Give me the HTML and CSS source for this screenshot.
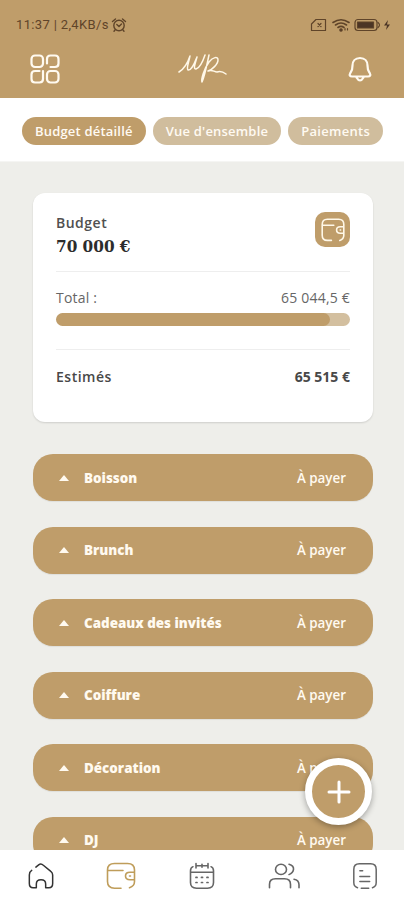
FILE: index.html
```
<!DOCTYPE html>
<html lang="fr">
<head>
<meta charset="utf-8">
<title>Budget</title>
<link rel="stylesheet" href="styles.css">
</head>
<body>
<div class="app">
  <header class="header">
    <div class="status">
      <span class="clock">11:37 | 2,4KB/s</span>
      <svg class="alarm" width="16" height="16" viewBox="0 0 16 16"><circle cx="8" cy="8.5" r="5.2"/><path d="M1.5 4.5 4.5 2M14.5 4.5 11.5 2M5.8 7.5 8 9.5l2.5-2.5M4 13l-1 1.2M12 13l1 1.2"/></svg>
      <svg class="signals" width="82" height="14" viewBox="0 0 82 14">
        <path d="M6 1.500h9.500v11h-14V6z"/><path d="m8 5.500 3 3m0-3-3 3"/>
        <path d="M23 4.500q8-5.500 16 0M25.500 7q5.500-4 11 0M28 9.500q3-2.200 6 0" stroke-width="1.600"/><circle class="solid" cx="31" cy="12" r="1.200"/><path d="M35 10.500v1.500m2.500-1.500v1.500"/>
        <rect x="45" y="1.500" width="22" height="11" rx="3"/><rect class="solid" x="47.500" y="4" width="16" height="6"/><path d="M68 4.500q3 2.500 0 5"/>
        <path class="solid" d="m78 2-4 5.500h3l-1 4.500 4-5.500h-3z" stroke="none"/>
      </svg>
    </div>
    <div class="topbar">
      <svg class="grid-icon" width="30" height="30" viewBox="0 0 30 30"><rect x="1.500" y="1.500" width="11.500" height="11.500" rx="3.500"/><path d="M17 9.500V5q0-3.500 3.500-3.500H25q3.500 0 3.500 3.500v4.500q0 3.500-3.500 3.500h-4.500M9.500 17H5q-3.500 0-3.500 3.500V25q0 3.500 3.500 3.500h4.500q3.500 0 3.500-3.500v-8"/><rect x="17" y="17" width="11.500" height="11.500" rx="3.500"/></svg>
      <svg class="logo" width="50" height="36" viewBox="0 0 50 36"><path d="M1 21C6 18 10 11 12 5c-1 6-4 12-2 14 4 1 7-8 9-13-2 7-4 12-1 12 4-1 7-8 9-14"/><path class="stem" d="M31 4c-2 9-4 20-7 27-1-3 2-13 7-20 4-5 9-6 9-2 0 4-6 10-10 11 4-2 6 1 9 1 3-1 5-1 9 2"/></svg>
      <svg class="bell" width="24" height="28" viewBox="0 0 24 28"><path d="M12 3c-5 0-7.500 3.300-7.500 7.500 0 5-1 5.500-2.300 7.700C1 20.500 2 21.500 4 21.500h16c2 0 3-1 1.800-3.300C20.500 16 19.500 15.500 19.500 10.500C19.500 6.300 17 3 12 3zM8.500 22.500q3.500 6 7 0"/></svg>
    </div>
  </header>
  <nav class="tabs">
    <a class="tab tab-detail active">Budget détaillé</a>
    <a class="tab tab-overview">Vue d'ensemble</a>
    <a class="tab tab-payments">Paiements</a>
  </nav>
  <main class="content">
    <section class="card">
      <div class="summary">
        <div>
          <div class="label">Budget</div>
          <div class="amount">70 000 €</div>
        </div>
        <div class="wallet-badge"><svg width="24" height="24" viewBox="0 0 30 30"><path d="M13 28H8q-6.500 0-6.500-6.500V8Q1.500 1.500 8 1.500h14q6.500 0 6.500 6.500v13.500q0 5-5 6.500M2 9h14M28.500 11H24q-4.500 0-4.500 4t4.500 4h4.500M24 15h.5"/></svg></div>
      </div>
      <div class="progress">
        <div class="line total"><span>Total :</span><span class="total-value">65 044,5 €</span></div>
        <div class="track"><div class="fill"></div></div>
      </div>
      <div class="line estimate"><span>Estimés</span><span class="estimate-value">65 515 €</span></div>
    </section>
    <div class="list">
      <div class="row"><i class="caret"></i><span class="name">Boisson</span><span class="pay">À payer</span></div>
      <div class="row"><i class="caret"></i><span class="name">Brunch</span><span class="pay">À payer</span></div>
      <div class="row"><i class="caret"></i><span class="name">Cadeaux des invités</span><span class="pay">À payer</span></div>
      <div class="row"><i class="caret"></i><span class="name">Coiffure</span><span class="pay">À payer</span></div>
      <div class="row"><i class="caret"></i><span class="name">Décoration</span><span class="pay">À payer</span></div>
      <div class="row"><i class="caret"></i><span class="name">DJ</span><span class="pay">À payer</span></div>
    </div>
  </main>
  <button class="add" aria-label="Ajouter"><svg width="24" height="24" viewBox="0 0 24 24"><path d="M12 2v20M2 12h20"/></svg></button>
  <nav class="bottom">
    <svg class="dark" width="28" height="28" viewBox="0 0 30 30"><path d="M5 9Q2.500 10.500 2.500 14v9q0 4.500 4 4.500h3.500v-4q0-4.500 5-4.500t5 4.500v4h3.500q4 0 4-4.500v-9q0-2.500-2-4l-8-6.500Q15 1 12.500 3L9.500 5.500"/></svg>
    <svg class="gold" width="30" height="28" viewBox="0 0 30 30" preserveAspectRatio="none"><path d="M15 28H8.500q-7 0-7-7V8.500q0-7 7-7h13q7 0 7 7V21q0 5-5 6.500M2 9h15M28.500 11H24q-4.500 0-4.500 4t4.500 4h4.500M23.500 15h1"/></svg>
    <svg width="30" height="28" viewBox="0 0 30 30" preserveAspectRatio="none"><path d="M6 5Q3.500 6 3.500 9.500v12.500q0 6 6 6h11q6 0 6-6V9.500q0-3.500-2.500-4.500M9 1.500v5M15 2.500v3M21 1.500v5M9 4h5M16 4h5M3.500 11h23"/><path class="dots" d="M9 16.500h1M14.500 16.500h1M20 16.500h1M9 22h1M14.500 22h1M20 22h1"/></svg>
    <svg width="34" height="28" viewBox="0 0 34 30" preserveAspectRatio="none"><circle cx="14" cy="8" r="5.500"/><path d="M22 2.500q5 1.500 4.500 5.500T22 13.500M2.500 27.500V24q0-6 6-6h9q6 0 6 6v3.500M27 18.500q5 1 5 6v3"/></svg>
    <svg width="28" height="28" viewBox="0 0 30 30"><path d="M7 27.500q-4-1-4-5.500V8q0-6 6-6h12q6 0 6 6v14q0 4.500-4 5.500M11 28h8M9.500 9.500h3M9.500 15.500H20M9.500 21H20"/></svg>
  </nav>
</div>
</body>
</html>
```
FILE: styles.css
```
* { box-sizing: border-box; }
body { margin: 0; font-family: "Open Sans", sans-serif; font-size: 13px; color: #666; }
svg { display: block; fill: none; stroke-linecap: round; stroke-linejoin: round; flex: none; }
.app { position: relative; width: 404px; height: 900px; overflow: hidden; display: flex; flex-direction: column; background: #eeeeea; }
.header { height: 98px; flex: none; background: #bf9d6a; }
.status { display: flex; align-items: center; height: 50px; padding: 0 14px 0 16px; }
.clock { font: 13px/16px Roboto, sans-serif; color: #5f4429; letter-spacing: .35px; width: 95px; white-space: nowrap; }
.alarm { stroke: #5f4429; stroke-width: 1.4; }
.signals { margin-left: auto; margin-right: -2px; stroke: #5f4429; stroke-width: 1.2; }
.signals .solid { fill: #4b3525; }
.topbar { display: grid; grid-template-columns: 1fr 50px 1fr; align-items: center; height: 38px; padding: 0 32px 0 30px; }
.grid-icon, .bell { stroke: #fffaf0; stroke-width: 2.2; }
.logo { margin-left: 2px; stroke: #fff8e8; stroke-width: 1.5; }
.bell { justify-self: end; }
.tabs { height: 64px; flex: none; display: flex; gap: 7px; padding: 18.5px 21px 0 22px; background: #fff; border-bottom: 1px solid #f5f5f3; }
.tab { height: 28px; border-radius: 14px; background: #d0bd9d; color: #fffaf2; font-weight: 600; line-height: 29px; text-align: center; white-space: nowrap; }
.tab.active { background: #bf9d6a; }
.tab-detail { width: 124px; letter-spacing: .2px; }
.tab-overview { width: 129px; letter-spacing: .2px; }
.tab-payments { width: 95px; letter-spacing: .3px; }
.content { flex: 1; min-height: 0; overflow: hidden; padding: 31px 31px 0 33px; }
.card { height: 229px; padding: 0 23px; border-radius: 12px; background: #fff; box-shadow: 0 1px 2px #0002; }
.summary { height: 79px; padding-top: 19px; display: flex; justify-content: space-between; border-bottom: 1px solid #eee; }
.label { font-size: 14px; font-weight: 600; line-height: 22px; letter-spacing: .5px; color: #505050; }
.amount { font: bold 17px/24px "DejaVu Serif Condensed", "DejaVu Serif", serif; font-stretch: condensed; color: #2c2c2c; }
.wallet-badge { width: 35px; height: 35px; border-radius: 10px; background: #bf9d6a; display: grid; place-items: center; }
.wallet-badge svg { stroke: #fff8e8; stroke-width: 2; }
.progress { height: 78px; padding-top: 15px; border-bottom: 1px solid #eee; }
.line { display: flex; justify-content: space-between; font-size: 14px; line-height: 22px; }
.total { letter-spacing: .2px; }
.track { height: 13px; margin-top: 4px; border-radius: 7px; background: #d3bf9f; overflow: hidden; }
.fill { width: 274px; height: 100%; border-radius: 7px; background: #bf9d6a; }
.estimate { padding-top: 16px; font-weight: 600; letter-spacing: .5px; color: #484848; }
.estimate-value { font-weight: 700; letter-spacing: 0; }
.list { display: flex; flex-direction: column; gap: 25.6px; margin-top: 32px; }
.row { display: flex; align-items: center; flex: none; height: 47px; padding: 0 27px 0 26px; border-radius: 20px; background: #bf9d6a; color: #fffaf0; box-shadow: 0 1px 1px #0001; }
.caret { border: 5px solid transparent; border-top: 0; border-bottom: 6px solid #fffaf0; }
.name { margin-left: 15px; font-size: 13.4px; font-weight: 800; }
.pay { margin-left: auto; font-size: 13.4px; font-weight: 600; }
.add { position: absolute; left: 305px; top: 758px; width: 67px; height: 67px; padding: 0; border: 7px solid #fff; border-radius: 50%; background: #bf9d6a; display: grid; place-items: center; box-shadow: 0 2px 6px #0005; }
.add svg { stroke: #fff; stroke-width: 3; }
.bottom { height: 50px; flex: none; display: flex; justify-content: space-between; padding: 12px 25px 0 27px; background: #fff; }
.bottom svg { stroke: #666; stroke-width: 1.6; }
.bottom .dark { stroke: #333; }
.bottom .gold { margin-left: 1px; stroke: #bf9d5a; }
.bottom .dots { stroke-width: 1.8; }
```
